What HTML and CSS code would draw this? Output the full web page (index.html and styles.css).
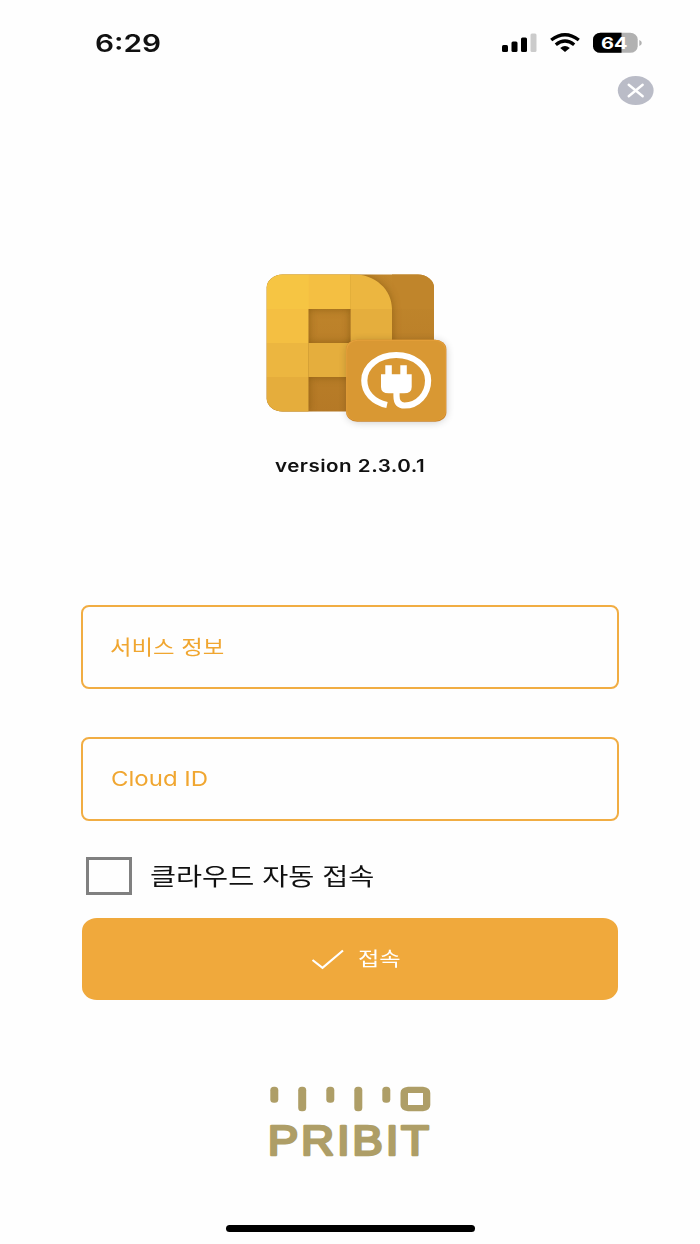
FILE: index.html
```
<!DOCTYPE html>
<html lang="ko">
  <head>
    <meta charset="utf-8">
    <title>PRIBIT</title>
    <link rel="stylesheet" href="styles.css">
  </head>
  <body>
    <header class="status">
      <span class="time wide">6:29</span>
      <svg class="signals" width="144" height="26" viewBox="500 30 144 26">
        <rect x="502" y="45" width="6" height="7" rx="1.5"/>
        <rect x="511.500" y="41.500" width="6" height="10.500" rx="1.500"/>
        <rect x="521" y="37.500" width="6" height="14.500" rx="1.500"/>
        <rect x="530.500" y="33.500" width="6" height="18.500" rx="1.500" fill="#cbcbcb"/>
        <g fill="none" stroke="#000" stroke-width="3.400">
          <path d="M551.200 40Q565 29.600 578.800 40"/>
          <path d="M555.800 44.700Q565 37.300 574.200 44.700"/>
        </g>
        <path d="M560.200 48Q565 44 569.800 48L565 52Z"/>
        <clipPath id="cell"><rect x="593" y="32.800" width="44.700" height="20" rx="7.500" ry="6.500"/></clipPath>
        <g clip-path="url(#cell)">
          <rect x="593" y="32" width="45" height="22" fill="#b1b1b1"/>
          <rect x="593" y="32" width="28.500" height="22"/>
        </g>
        <path d="M639.300 40Q641.800 41 641.800 43T639.300 46Z" fill="#b1b1b1"/>
        <text class="level" x="601" y="48.900" textLength="26.500" lengthAdjust="spacingAndGlyphs">64</text>
      </svg>
    </header>

    <div class="tools">
      <svg class="close" width="37" height="31" viewBox="0 0 37 31">
        <ellipse cx="18.700" cy="15.500" rx="17.900" ry="14.600" fill="#babcc7"/>
        <path d="M11.700 9.800L25.700 21.200M25.700 9.800L11.700 21.200" stroke="#fff" stroke-width="2.400" stroke-linecap="round"/>
      </svg>
    </div>

    <main>
      <svg class="logo" width="212" height="170" viewBox="244 264 212 170">
        <defs>
          <clipPath id="tile"><rect x="266.700" y="274.600" width="167.300" height="137" rx="16" ry="13"/></clipPath>
          <clipPath id="p"><path clip-rule="evenodd" d="M266 274H351C376 274 392 290 392 309V377H308.700V412H266ZM308.700 309V343H350.400V309Z"/></clipPath>
          <linearGradient id="back" x1="0" y1="0" x2="0" y2="1">
            <stop offset="0" stop-color="#c1872c"/>
            <stop offset="1" stop-color="#b57926"/>
          </linearGradient>
          <filter id="soft" x="-20%" y="-20%" width="140%" height="140%">
            <feGaussianBlur stdDeviation="4"/>
          </filter>
        </defs>
        <g clip-path="url(#tile)">
          <rect x="266" y="274" width="169" height="138" fill="url(#back)"/>
          <path d="M392 274H435V309H392Z" fill="#c0852b"/>
          <path d="M266 274H351C376 274 392 290 392 309V377H308.700V412H266ZM308.700 309V343H350.400V309Z" fill="#6b4510" fill-rule="evenodd" opacity=".5" filter="url(#soft)"/>
          <g clip-path="url(#p)">
            <rect x="266" y="274" width="43" height="35" fill="#f6c543"/>
            <rect x="308.700" y="274" width="42" height="35" fill="#f4bf42"/>
            <rect x="350.400" y="274" width="42" height="35" fill="#ecb640"/>
            <rect x="266" y="309" width="42.700" height="34" fill="#f4bf42"/>
            <rect x="350.400" y="309" width="42" height="34" fill="#e5ae3d"/>
            <rect x="266" y="343" width="42.700" height="34" fill="#ecb640"/>
            <rect x="308.700" y="343" width="41.700" height="34" fill="#e5ae3d"/>
            <rect x="350.400" y="343" width="42" height="34" fill="#dfa63a"/>
            <rect x="266" y="377" width="42.700" height="35" fill="#e5ad3c"/>
          </g>
        </g>
        <rect x="347" y="341" width="99" height="81" rx="12" ry="10" fill="#000" opacity=".22" filter="url(#soft)"/>
        <rect x="346.200" y="339.800" width="100.200" height="82" rx="11" ry="9.500" fill="#cc862b"/>
        <rect x="346.200" y="339.800" width="99.700" height="81" rx="11" ry="9.500" fill="#e5a03b"/>
        <rect x="347.200" y="340.800" width="98" height="79.800" rx="10.500" ry="9" fill="#d99833"/>
        <path d="M387 405C373 402 364.300 392.500 364.300 380.500C364.300 366 378.500 355 396.200 355S428.100 366 428.100 380.500C428.100 394 418 405.500 404.500 405.500C399 405.500 396.500 402 396.500 396V391" fill="none" stroke="#fff" stroke-width="6.200"/>
        <path d="M385.300 365.300H391.800V374.300H400.300V365.300H406.800V374.300H411.700V387Q411.700 393.300 404 393.300H388.800Q381 393.300 381 387V374.300H385.300Z" fill="#fff"/>
      </svg>
      <p class="version"><span class="wide">version 2.3.0.1</span></p>

      <form class="connect">
        <label class="field"><span class="wide">서비스 정보</span></label>
        <label class="field"><span class="wide latin">Cloud ID</span></label>
        <label class="auto">
          <span class="box"></span>
          <span class="wide">클라우드 자동 접속</span>
        </label>
        <button class="submit" type="button">
          <svg width="34" height="22" viewBox="0 0 34 22">
            <path d="M1.500 12L11.500 19.800L32 2.500" fill="none" stroke="#fff" stroke-width="2.200"/>
          </svg>
          <span class="wide">접속</span>
        </button>
      </form>
    </main>

    <footer>
      <svg class="brand" width="180" height="84" viewBox="260 1080 180 84" fill="#ae9e67">
        <rect x="270.300" y="1086.800" width="8" height="16" rx="3.500"/>
        <rect x="298.200" y="1086.800" width="8" height="24.500" rx="3.500"/>
        <rect x="326.300" y="1086.800" width="8" height="16" rx="3.500"/>
        <rect x="354.300" y="1086.800" width="8" height="24.500" rx="3.500"/>
        <rect x="382.300" y="1086.800" width="8" height="16" rx="3.500"/>
        <path fill-rule="evenodd" d="M408 1086.800H423Q430.300 1087.500 430.300 1093V1105Q430.300 1110.500 423 1111.300H408Q400.500 1110.500 400.500 1105V1093Q400.500 1087.500 408 1086.800ZM408 1093V1105H423V1093Z"/>
        <text class="brand-name" x="267.800" y="1154.500" textLength="164" lengthAdjust="spacingAndGlyphs">PRIBIT</text>
      </svg>
      <div class="home"></div>
    </footer>
  </body>
</html>
```

FILE: styles.css
```
* { box-sizing: border-box; }

body {
  display: flex;
  flex-direction: column;
  height: 1244px;
  margin: 0;
  background: #fefefe;
  color: #111;
  font-family: Inter, "Noto Sans CJK KR", sans-serif;
}

svg { display: block; flex: none; }

/* all type is set extended */
.wide {
  display: inline-block;
  white-space: nowrap;
  transform: scaleX(1.17);
  transform-origin: 0 50%;
}

.status {
  display: flex;
  justify-content: space-between;
  padding: 30px 56px 0 95px;
}
.time {
  font-size: 24px;
  font-weight: 600;
  line-height: 27px;
  transform: scaleX(1.24);
}
.level {
  fill: #fff;
  font-size: 16px;
  font-weight: 700;
}

.tools {
  display: flex;
  justify-content: flex-end;
  padding: 18px 46px 0 0;
}

main {
  display: flex;
  flex-direction: column;
  align-items: center;
  padding-top: 158px;
}

.version {
  margin: 20px 0 0;
  font-size: 17px;
  font-weight: 600;
  letter-spacing: 0.4px;
  line-height: 24px;
}
.version .wide {
  transform: scaleX(1.21);
  transform-origin: 50% 50%;
}

.connect {
  width: 538px;
  margin-top: 127px;
}
.field {
  display: flex;
  align-items: center;
  height: 84px;
  margin-bottom: 48px;
  padding: 0 0 1px 27px;
  border: 2px solid #f1ad43;
  border-radius: 8px;
  color: #f0a630;
  font-size: 20px;
}
.field .latin {
  margin-left: 1px;
  font-size: 20.5px;
}

.auto {
  display: flex;
  align-items: center;
  gap: 18px;
  height: 38px;
  margin: -12px 0 23px 5px;
  font-size: 24px;
}
.auto .wide {
  margin-top: -4px;
  transform: scaleX(1.18);
}
.box {
  width: 46px;
  height: 38px;
  border: 3px solid #808080;
}

.submit {
  display: flex;
  align-items: center;
  gap: 13px;
  width: 536px;
  height: 82px;
  margin: 0 1px;
  padding: 0 0 0 229px;
  border: 0;
  border-radius: 15px / 13px;
  background: #f0a93c;
  color: #fff;
  font: 400 19px Inter, "Noto Sans CJK KR", sans-serif;
}
.submit .wide {
  margin-top: -3px;
  transform: scaleX(1.22);
}

footer {
  display: flex;
  flex-direction: column;
  align-items: center;
  margin-top: 80px;
}
.brand-name {
  font-family: "Liberation Sans", sans-serif;
  font-size: 43px;
  letter-spacing: 2.5px;
  stroke: #ae9e67;
  stroke-width: 2.6px;
  stroke-linejoin: round;
}
.home {
  width: 249px;
  height: 7px;
  margin-top: 61px;
  border-radius: 4px;
  background: #000;
}
```
